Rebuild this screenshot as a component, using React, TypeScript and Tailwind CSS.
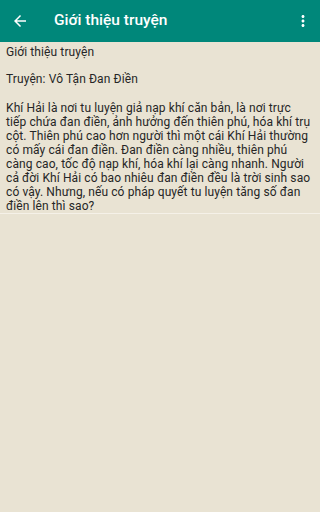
import React from "react";

const lines = [
  "Khí Hải là nơi tu luyện giả nạp khí căn bản, là nơi trực",
  "tiếp chứa đan điền, ảnh hưởng đến thiên phú, hóa khí trụ",
  "cột. Thiên phú cao hơn người thì một cái Khí Hải thường",
  "có mấy cái đan điền. Đan điền càng nhiều, thiên phú",
  "càng cao, tốc độ nạp khí, hóa khí lại càng nhanh. Người",
  "cả đời Khí Hải có bao nhiêu đan điền đều là trời sinh sao",
  "có vậy. Nhưng, nếu có pháp quyết tu luyện tăng số đan",
  "điền lên thì sao?",
];

export default function App() {
  return (
    <div
      className="min-h-screen w-full bg-[#e9e3d3]"
      style={{ fontFamily: "Roboto, 'Noto Sans', sans-serif" }}
    >
      <div className="flex h-[42px] items-center bg-[#00877a] pl-[11px] pr-[8px] text-white">
        <svg viewBox="0 0 24 24" className="h-[18px] w-[18px]" fill="currentColor">
          <path d="M20 11H7.83l5.59-5.59L12 4l-8 8 8 8 1.41-1.41L7.83 13H20v-2z" />
        </svg>
        <div className="ml-[25px] flex-1 text-[15.5px] font-medium leading-none">
          Giới thiệu truyện
        </div>
        <svg viewBox="0 0 24 24" className="h-[18px] w-[18px]" fill="currentColor">
          <path d="M12 8c1.1 0 2-.9 2-2s-.9-2-2-2-2 .9-2 2 .9 2 2 2zm0 2c-1.1 0-2 .9-2 2s.9 2 2 2 2-.9 2-2-.9-2-2-2zm0 6c-1.1 0-2 .9-2 2s.9 2 2 2 2-.9 2-2-.9-2-2-2z" />
        </svg>
      </div>
      <div className="pl-[6px] pr-[2px] pt-[3px] text-[12px] leading-[14px] tracking-[0.1px] text-[#262626]">
        <p>Giới thiệu truyện</p>
        <p className="h-[13px]"></p>
        <p>Truyện: Vô Tận Đan Điền</p>
        <p className="h-[15px]"></p>
        <div>
          {lines.map((l, i) => (
            <div key={i} className="whitespace-nowrap">
              {l}
            </div>
          ))}
        </div>
      </div>
      <div className="h-px bg-[#f5f1e8]"></div>
    </div>
  );
}
